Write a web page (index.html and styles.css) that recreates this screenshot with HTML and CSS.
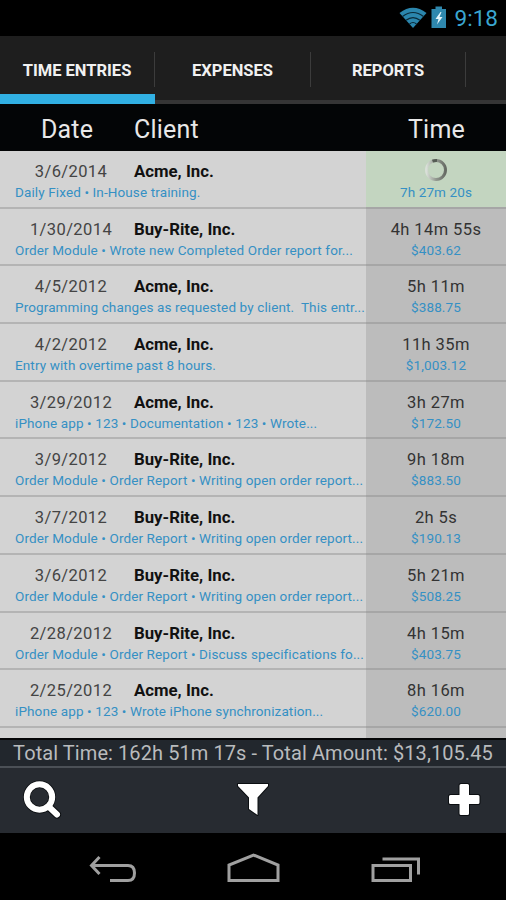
FILE: index.html
```html
<!DOCTYPE html>
<html lang="en">
<head>
    <meta charset="UTF-8">
    <meta name="viewport" content="width=device-width, initial-scale=1.0">
    <title>Time Entries</title>
    <link rel="stylesheet" href="styles.css">
</head>
<body>
    <div class="status">
        <svg class="wifi" width="28" height="22" viewBox="0 0 28 22">
            <path d="M0.500 6 Q14 -4.500 27.500 6 L14 21 Z" fill="#2b86ad"/>
            <path d="M3.500 9.500 Q14 1.500 24.500 9.500 M7 13.300 Q14 7.800 21 13.300 M10.500 17 Q14 14 17.500 17" fill="none" stroke="#0a2a38" stroke-width="1.200"/>
        </svg>
        <svg class="battery" width="16" height="22" viewBox="0 0 16 22">
            <path d="M0.500 3 H4.500 V0.500 H11 V3 H15 V22 H0.500 Z" fill="#2f88ae"/>
            <path d="M9.500 6 L4.500 13 H7.500 L6 18.500 L11.500 11 H8.500 L10.500 6 Z" fill="#e4f5fb"/>
        </svg>
        <span class="clock">9:18</span>
    </div>

    <div class="tabs">
        <div class="tab active"><span>TIME ENTRIES</span></div>
        <div class="tab"><span>EXPENSES</span></div>
        <div class="tab"><span>REPORTS</span></div>
        <div class="tab"></div>
    </div>

    <div class="header">
        <div class="h-date">Date</div>
        <div class="h-client">Client</div>
        <div class="h-time">Time</div>
    </div>

    <div class="list">
        <div class="row">
            <div class="entry">
                <div class="top"><span class="date">3/6/2014</span><span class="client">Acme, Inc.</span></div>
                <div class="note">Daily Fixed • In-House training.</div>
            </div>
            <div class="amount running">
                <div class="time">
                    <svg width="24" height="24" viewBox="0 0 24 24">
                        <defs>
                            <linearGradient id="spin" x1="0" y1="0" x2="1" y2="0">
                                <stop offset="0" stop-color="#d9dfd8"/>
                                <stop offset="0.500" stop-color="#92978f"/>
                                <stop offset="1" stop-color="#666b64"/>
                            </linearGradient>
                        </defs>
                        <circle cx="12" cy="12" r="9.500" fill="none" stroke="url(#spin)" stroke-width="3"/>
                        <path d="M8.500 3.200 A9.500 9.500 0 0 1 13 2.500" fill="none" stroke="#555b54" stroke-width="3"/>
                    </svg>
                </div>
                <div class="money">7h 27m 20s</div>
            </div>
        </div>
        <div class="row">
            <div class="entry">
                <div class="top"><span class="date">1/30/2014</span><span class="client">Buy-Rite, Inc.</span></div>
                <div class="note">Order Module • Wrote new Completed Order report for...</div>
            </div>
            <div class="amount">
                <div class="time">4h 14m 55s</div>
                <div class="money">$403.62</div>
            </div>
        </div>
        <div class="row">
            <div class="entry">
                <div class="top"><span class="date">4/5/2012</span><span class="client">Acme, Inc.</span></div>
                <div class="note">Programming changes as requested by client.&nbsp; This entr...</div>
            </div>
            <div class="amount">
                <div class="time">5h 11m</div>
                <div class="money">$388.75</div>
            </div>
        </div>
        <div class="row">
            <div class="entry">
                <div class="top"><span class="date">4/2/2012</span><span class="client">Acme, Inc.</span></div>
                <div class="note">Entry with overtime past 8 hours.</div>
            </div>
            <div class="amount">
                <div class="time">11h 35m</div>
                <div class="money">$1,003.12</div>
            </div>
        </div>
        <div class="row">
            <div class="entry">
                <div class="top"><span class="date">3/29/2012</span><span class="client">Acme, Inc.</span></div>
                <div class="note">iPhone app • 123 • Documentation • 123 • Wrote...</div>
            </div>
            <div class="amount">
                <div class="time">3h 27m</div>
                <div class="money">$172.50</div>
            </div>
        </div>
        <div class="row">
            <div class="entry">
                <div class="top"><span class="date">3/9/2012</span><span class="client">Buy-Rite, Inc.</span></div>
                <div class="note">Order Module • Order Report • Writing open order report...</div>
            </div>
            <div class="amount">
                <div class="time">9h 18m</div>
                <div class="money">$883.50</div>
            </div>
        </div>
        <div class="row">
            <div class="entry">
                <div class="top"><span class="date">3/7/2012</span><span class="client">Buy-Rite, Inc.</span></div>
                <div class="note">Order Module • Order Report • Writing open order report...</div>
            </div>
            <div class="amount">
                <div class="time">2h 5s</div>
                <div class="money">$190.13</div>
            </div>
        </div>
        <div class="row">
            <div class="entry">
                <div class="top"><span class="date">3/6/2012</span><span class="client">Buy-Rite, Inc.</span></div>
                <div class="note">Order Module • Order Report • Writing open order report...</div>
            </div>
            <div class="amount">
                <div class="time">5h 21m</div>
                <div class="money">$508.25</div>
            </div>
        </div>
        <div class="row">
            <div class="entry">
                <div class="top"><span class="date">2/28/2012</span><span class="client">Buy-Rite, Inc.</span></div>
                <div class="note">Order Module • Order Report • Discuss specifications fo...</div>
            </div>
            <div class="amount">
                <div class="time">4h 15m</div>
                <div class="money">$403.75</div>
            </div>
        </div>
        <div class="row">
            <div class="entry">
                <div class="top"><span class="date">2/25/2012</span><span class="client">Acme, Inc.</span></div>
                <div class="note">iPhone app • 123 • Wrote iPhone synchronization...</div>
            </div>
            <div class="amount">
                <div class="time">8h 16m</div>
                <div class="money">$620.00</div>
            </div>
        </div>
        <div class="row">
            <div class="entry"></div>
            <div class="amount"></div>
        </div>
    </div>

    <div class="total">Total Time: 162h 51m 17s - Total Amount: $13,105.45</div>

    <div class="toolbar">
        <svg width="40" height="40" viewBox="0 0 40 40">
            <g fill="none" stroke-linecap="round">
                <path d="M26.500 26.500 L35 34.500" stroke="#0b0e11" stroke-width="8"/>
                <circle cx="17.500" cy="17" r="12.700" stroke="#0b0e11" stroke-width="7.500"/>
                <path d="M26.500 26.500 L35 34.500" stroke="#fff" stroke-width="6"/>
                <circle cx="17.500" cy="17" r="12.700" stroke="#fff" stroke-width="6"/>
            </g>
        </svg>
        <svg width="40" height="40" viewBox="0 0 40 40">
            <path d="M5 4 H35 V6 L24.500 17.500 V35 L16 29 V17.500 L5 6 Z" fill="#fff" stroke="#0b0e11" stroke-width="2" stroke-linejoin="round" paint-order="stroke"/>
        </svg>
        <svg width="40" height="40" viewBox="0 0 40 40">
            <path d="M17 4 H23.500 Q25 4 25 5.500 V15 H34 Q35.500 15 35.500 16.500 V22.500 Q35.500 24 34 24 H25 V33.500 Q25 35 23.500 35 H17 Q15.500 35 15.500 33.500 V24 H6.500 Q5 24 5 22.500 V16.500 Q5 15 6.500 15 H15.500 V5.500 Q15.500 4 17 4 Z" fill="#fff" stroke="#0b0e11" stroke-width="2" paint-order="stroke"/>
        </svg>
    </div>

    <div class="nav">
        <svg width="60" height="40" viewBox="0 0 60 40">
            <path d="M15.500 4 L7.500 12.500 L15.500 21 M8 12.500 H44 Q50.500 12.500 50.500 20 Q50.500 27.500 44 27.500 H26"/>
        </svg>
        <svg width="60" height="40" viewBox="0 0 60 40">
            <path d="M6 27.500 V12 L30.500 2 L55 12 V27.500 Z"/>
        </svg>
        <svg width="60" height="40" viewBox="0 0 60 40">
            <path d="M11 12.500 H48.500 V27.500 H11 Z M20.500 6 H56.500 V21.500"/>
        </svg>
    </div>
</body>
</html>
```
FILE: styles.css
```css
        body {
            margin: 0;
            width: 506px;
            height: 900px;
            overflow: hidden;
            background: #000;
            font-family: Roboto, "Liberation Sans", sans-serif;
            display: flex;
            flex-direction: column;
        }
        svg { display: block; flex: none; }

        .status {
            height: 36px;
            flex: none;
            display: flex;
            justify-content: flex-end;
            box-sizing: border-box;
            padding: 7px 8px 0 0;
        }
        .battery { margin: -1px 8px 0 4px; }
        .clock {
            color: #3aa6d0;
            font-size: 22.5px;
            line-height: 23px;
        }

        .tabs {
            height: 68px;
            flex: none;
            display: grid;
            grid-template-columns: 155px 156px 155px 40px;
            background: #1e1e1e;
        }
        .tab {
            box-sizing: border-box;
            padding-top: 16px;
            border-bottom: 4px solid #353535;
        }
        .tab.active { border-bottom: 10px solid #31b0e3; }
        .tab span {
            display: block;
            height: 35px;
            line-height: 37px;
            border-right: 1px solid #3c3c3c;
            text-align: center;
            color: #f1f1f1;
            font-size: 16.5px;
            font-weight: bold;
        }

        .header {
            height: 47px;
            flex: none;
            display: flex;
            line-height: 51px;
            background: #030506;
            color: #e8e8e8;
            font-size: 25px;
            letter-spacing: 0.2px;
        }
        .h-date { width: 134px; text-align: center; }
        .h-client { width: 233px; }
        .h-time { flex: 1; text-align: center; }

        .list {
            height: 587px;
            flex: none;
            overflow: hidden;
            background: #d3d3d3;
        }
        .row {
            height: 57.7px;
            display: flex;
        }
        .entry, .amount {
            box-sizing: border-box;
            border-bottom: 2px solid #b4b4b4;
            padding-top: 9px;
            white-space: nowrap;
        }
        .entry { width: 366px; padding-left: 15px; }
        .amount {
            flex: 1;
            text-align: center;
            background: #bcbcbc;
            border-color: #a6a6a6;
        }
        .running { background: #c3d5c0; }
        .top { display: flex; height: 22px; line-height: 22px; font-size: 16.8px; }
        .date {
            width: 112px;
            margin-right: 7px;
            text-align: center;
            color: #444;
            font-size: 16.5px;
            line-height: 23px;
            letter-spacing: 0.4px;
        }
        .client { color: #111; font-weight: bold; }
        .note, .money {
            height: 20px;
            line-height: 20px;
            font-size: 13.5px;
            letter-spacing: 0.12px;
            color: #3590c4;
        }
        .time {
            height: 22px;
            line-height: 23px;
            color: #333;
            font-size: 16.5px;
            letter-spacing: 0.4px;
        }
        .time svg { margin: 0 auto; position: relative; top: -2px; }

        .total {
            height: 28px;
            flex: none;
            box-sizing: border-box;
            border-top: 2px solid #050607;
            background: #22272d;
            color: #b9bbbd;
            font-size: 20px;
            letter-spacing: 0.08px;
            line-height: 27px;
            text-align: center;
            white-space: nowrap;
        }

        .toolbar {
            height: 67px;
            flex: none;
            box-sizing: border-box;
            border-top: 2px solid #4b5056;
            padding: 12px 22px 0;
            display: flex;
            justify-content: space-between;
            background: #272b31;
        }

        .nav {
            height: 67px;
            flex: none;
            box-sizing: border-box;
            padding: 20px 84px 0;
            display: flex;
            justify-content: space-between;
        }
        .nav path { fill: none; stroke: #a0a0a0; stroke-width: 3; }
```
